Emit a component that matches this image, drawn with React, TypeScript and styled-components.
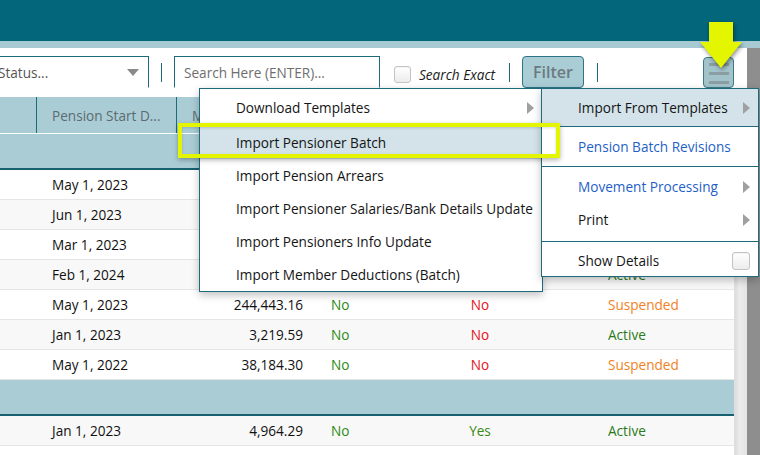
import React from "react";
import styled, { createGlobalStyle } from "styled-components";

type Row = {
  date: string;
  amount: string;
  flagA: string;
  flagB: string;
  status: "Active" | "Suspended" | "";
};

const GlobalStyle = createGlobalStyle`
  html, body {
    margin: 0;
    padding: 0;
    overflow: hidden;
    background: #ffffff;
  }
  body {
    font-family: "Open Sans", "DejaVu Sans", sans-serif;
    color: #111;
  }
`;

const teal = "#03667a";
const lightTeal = "#aacdd5";
const border = "#1f6b7c";
const fontSize = "13.6px";

const Page = styled.div`
  position: relative;
  width: 760px;
  height: 455px;
  overflow: hidden;
`;

const TopBar = styled.div`
  height: 41px;
  background: ${teal};
`;

const Strip = styled.div`
  height: 7px;
  background: #a8cbd3;
`;

const Main = styled.div`
  display: flex;
  height: 407px;
`;

const Content = styled.div`
  width: 747px;
  display: flex;
  flex-direction: column;
`;

const Gutter = styled.div`
  width: 13px;
  background: #8e8e8e;
`;

const Toolbar = styled.div`
  height: 49px;
  flex-shrink: 0;
  box-sizing: border-box;
  padding: 8px 13px 0 0;
  display: flex;
  align-items: flex-start;
  background: #fff;
`;

const InputBox = styled.div<{ $width: number }>`
  width: ${(p) => p.$width}px;
  height: 32px;
  flex-shrink: 0;
  box-sizing: border-box;
  border: 1px solid ${border};
  border-bottom-color: transparent;
  display: flex;
  align-items: center;
  font-size: ${fontSize};
  color: #666;
`;

const SelectBox = styled(InputBox)`
  margin-left: -21px;
  padding: 0 9px 0 18px;
  justify-content: space-between;
  color: #555;
`;

const SearchBox = styled(InputBox)`
  padding-left: 9px;
  color: #6e6e6e;
`;

const Caret = styled.span`
  width: 0;
  height: 0;
  border-left: 6px solid transparent;
  border-right: 6px solid transparent;
  border-top: 7px solid #8a8a8a;
  margin-top: 1px;
`;

const Sep = styled.div<{ $left: number; $right: number }>`
  width: 1px;
  height: 19px;
  flex-shrink: 0;
  margin: 7px ${(p) => p.$right}px 0 ${(p) => p.$left}px;
  background: ${border};
`;

const Check = styled.span<{ $size?: number }>`
  display: inline-block;
  flex-shrink: 0;
  width: ${(p) => p.$size ?? 17}px;
  height: ${(p) => p.$size ?? 17}px;
  box-sizing: border-box;
  border: 1px solid #c4c4c4;
  border-radius: 3px;
  background: linear-gradient(#ffffff, #ececec);
  box-shadow: inset 0 1px 1px rgba(0, 0, 0, 0.05);
`;

const ExactLabel = styled.label`
  width: 107px;
  flex-shrink: 0;
  margin: 10px 0 0 14px;
  display: flex;
  align-items: center;
  gap: 8px;
  font-size: ${fontSize};
  font-style: italic;
  color: #1a1a1a;
  line-height: 17px;
  white-space: nowrap;
`;

const FilterButton = styled.button`
  width: 62px;
  height: 32px;
  flex-shrink: 0;
  padding: 0;
  border: 1px solid #2c7486;
  border-radius: 4px;
  background: ${lightTeal};
  color: #6b7b80;
  font-family: inherit;
  font-size: 16px;
  font-weight: 600;
`;

const MenuButton = styled.button`
  margin: 1px 0 0 auto;
  width: 31px;
  height: 31px;
  padding: 5px 0 0;
  border: 1px solid #3a7a8b;
  border-radius: 4px;
  background: #a3c3ca;
  display: flex;
  flex-direction: column;
  align-items: center;
  gap: 6px;
`;

const MenuLine = styled.span`
  width: 20px;
  height: 3px;
  background: #8b9ea3;
`;

const TableWrap = styled.div`
  flex: 1;
  display: flex;
  min-height: 0;
  overflow: hidden;
`;

const Table = styled.div`
  width: 734px;
  display: flex;
  flex-direction: column;
  overflow: hidden;
`;

const ScrollTrack = styled.div`
  width: 13px;
  background: linear-gradient(90deg, #dcdcdc, #ececec 40%, #e4e4e4);
  border-left: 1px solid #e0e0e0;
  box-sizing: border-box;
`;

const columns = "37px 140px 141px 82px 160px 174px";

const HeadRow = styled.div`
  display: grid;
  flex-shrink: 0;
  grid-template-columns: ${columns};
  height: 37px;
  box-sizing: border-box;
  background: ${lightTeal};
  border-bottom: 1px solid #ffffff;
`;

const HeadCell = styled.div`
  display: flex;
  align-items: center;
  padding-left: 15px;
  border-right: 1px solid ${border};
  font-size: ${fontSize};
  color: #5b6b70;
  white-space: nowrap;
  overflow: hidden;
`;

const GroupRow = styled.div`
  height: 36px;
  flex-shrink: 0;
  box-sizing: border-box;
  background: ${lightTeal};
  border-bottom: 2px solid #17606f;
`;

const DataRow = styled.div<{ $alt: boolean }>`
  display: grid;
  flex-shrink: 0;
  grid-template-columns: ${columns};
  height: 30px;
  box-sizing: border-box;
  border-bottom: 1px solid #e6e6e6;
  background: ${(p) => (p.$alt ? "#f8f8f8" : "#ffffff")};
  font-size: ${fontSize};
  line-height: 29px;
`;

const Cell = styled.div<{ $align?: "left" | "right" | "center"; $pad?: string; $color?: string }>`
  text-align: ${(p) => p.$align ?? "left"};
  padding: ${(p) => p.$pad ?? "0"};
  color: ${(p) => p.$color ?? "#111"};
  white-space: nowrap;
`;

const Menu = styled.div<{ $left: number; $width: number }>`
  position: absolute;
  top: 88px;
  left: ${(p) => p.$left}px;
  width: ${(p) => p.$width}px;
  box-sizing: border-box;
  background: #ffffff;
  border: 1px solid ${border};
  box-shadow: 0 3px 8px rgba(0, 0, 0, 0.25);
  font-size: ${fontSize};
`;

const Section = styled.div<{ $pad?: string }>`
  padding: ${(p) => p.$pad ?? "0"};
  border-bottom: 1px solid ${border};
  &:last-child {
    border-bottom: none;
  }
`;

const Item = styled.div<{ $height: number; $active?: boolean; $link?: boolean; $top?: number }>`
  height: ${(p) => p.$height}px;
  box-sizing: border-box;
  padding: ${(p) => p.$top ?? 0}px 8px 0 36px;
  display: flex;
  align-items: center;
  justify-content: space-between;
  background: ${(p) => (p.$active ? "#d3e3e9" : "transparent")};
  color: ${(p) => (p.$link ? "#1f5fc8" : "#151515")};
  white-space: nowrap;
`;

const SubArrow = styled.span`
  width: 0;
  height: 0;
  border-top: 6px solid transparent;
  border-bottom: 6px solid transparent;
  border-left: 7px solid #a0a0a0;
`;

const Callout = styled.div`
  position: absolute;
  left: 178px;
  top: 123px;
  width: 382px;
  height: 35px;
  box-sizing: border-box;
  border: 4px solid #e3f500;
  box-shadow: 0 2px 5px rgba(0, 0, 0, 0.3), inset 0 1px 3px rgba(0, 0, 0, 0.15);
  pointer-events: none;
`;

const Pointer = styled.svg`
  position: absolute;
  left: 699px;
  top: 22px;
  filter: drop-shadow(1px 2px 2px rgba(0, 0, 0, 0.45));
`;

const rows: Row[] = [
  { date: "May 1, 2023", amount: "12,510.00", flagA: "No", flagB: "No", status: "Active" },
  { date: "Jun 1, 2023", amount: "8,402.77", flagA: "No", flagB: "No", status: "Active" },
  { date: "Mar 1, 2023", amount: "56,120.45", flagA: "No", flagB: "No", status: "Active" },
  { date: "Feb 1, 2024", amount: "2,730.18", flagA: "No", flagB: "No", status: "Active" },
  { date: "May 1, 2023", amount: "244,443.16", flagA: "No", flagB: "No", status: "Suspended" },
  { date: "Jan 1, 2023", amount: "3,219.59", flagA: "No", flagB: "No", status: "Active" },
  { date: "May 1, 2022", amount: "38,184.30", flagA: "No", flagB: "No", status: "Suspended" },
];

const lastRows: Row[] = [
  { date: "Jan 1, 2023", amount: "4,964.29", flagA: "No", flagB: "Yes", status: "Active" },
  { date: "", amount: "", flagA: "", flagB: "", status: "" },
];

const templateItems = [
  "Import Pensioner Batch",
  "Import Pension Arrears",
  "Import Pensioner Salaries/Bank Details Update",
  "Import Pensioners Info Update",
  "Import Member Deductions (Batch)",
];

const TableRow = ({ row, alt }: { row: Row; alt: boolean }) => (
  <DataRow $alt={alt}>
    <Cell />
    <Cell $pad="0 0 0 15px">{row.date}</Cell>
    <Cell $align="right" $pad="0 15px 0 0">{row.amount}</Cell>
    <Cell $pad="0 0 0 13px" $color="#2a8a14">{row.flagA}</Cell>
    <Cell $align="center" $color={row.flagB === "Yes" ? "#3a8a14" : "#e8101c"}>{row.flagB}</Cell>
    <Cell $pad="0 0 0 48px" $color={row.status === "Active" ? "#2a7a1a" : "#f28224"}>{row.status}</Cell>
  </DataRow>
);

function App() {
  return (
    <>
      <GlobalStyle />
      <Page>
        <TopBar />
        <Strip />
        <Main>
          <Content>
            <Toolbar>
              <SelectBox $width={170}>
                <span>Status...</span>
                <Caret />
              </SelectBox>
              <Sep $left={12} $right={12} />
              <SearchBox $width={206}>Search Here (ENTER)...</SearchBox>
              <ExactLabel>
                <Check />
                Search Exact
              </ExactLabel>
              <Sep $left={8} $right={12} />
              <FilterButton>Filter</FilterButton>
              <Sep $left={13} $right={0} />
              <MenuButton aria-label="menu">
                <MenuLine />
                <MenuLine />
                <MenuLine />
              </MenuButton>
            </Toolbar>
            <TableWrap>
              <Table>
                <HeadRow>
                  <HeadCell />
                  <HeadCell>Pension Start D...</HeadCell>
                  <HeadCell>Monthly Pen...</HeadCell>
                  <HeadCell>Arrears</HeadCell>
                  <HeadCell>Revised</HeadCell>
                  <HeadCell>Status</HeadCell>
                </HeadRow>
                <GroupRow />
                {rows.map((r, i) => (
                  <TableRow key={i} row={r} alt={i % 2 === 1} />
                ))}
                <GroupRow />
                {lastRows.map((r, i) => (
                  <TableRow key={i} row={r} alt={i % 2 === 0} />
                ))}
              </Table>
              <ScrollTrack />
            </TableWrap>
          </Content>
          <Gutter />
        </Main>

        <Menu $left={199} $width={344}>
          <Section $pad="1px 0 0">
            <Item $height={35}>
              Download Templates
              <SubArrow />
            </Item>
            {templateItems.map((t, i) => (
              <Item key={t} $height={i === 0 ? 34 : 33} $active={i === 0}>
                {t}
              </Item>
            ))}
          </Section>
        </Menu>

        <Menu $left={541} $width={218}>
          <Section>
            <Item $height={37} $active>
              Import From Templates
              <SubArrow />
            </Item>
          </Section>
          <Section>
            <Item $height={39} $link>
              Pension Batch Revisions
            </Item>
          </Section>
          <Section $pad="3px 0 5px">
            <Item $height={33} $link>
              Movement Processing
              <SubArrow />
            </Item>
            <Item $height={33}>
              Print
              <SubArrow />
            </Item>
          </Section>
          <Section>
            <Item $height={34} $top={3}>
              Show Details
              <Check $size={18} />
            </Item>
          </Section>
        </Menu>

        <Callout />
        <Pointer width="44" height="48" viewBox="0 0 44 48">
          <polygon points="10,0 34,0 34,20 43,20 22,46 1,20 10,20" fill="#e3f600" />
        </Pointer>
      </Page>
    </>
  );
}

export default App;
